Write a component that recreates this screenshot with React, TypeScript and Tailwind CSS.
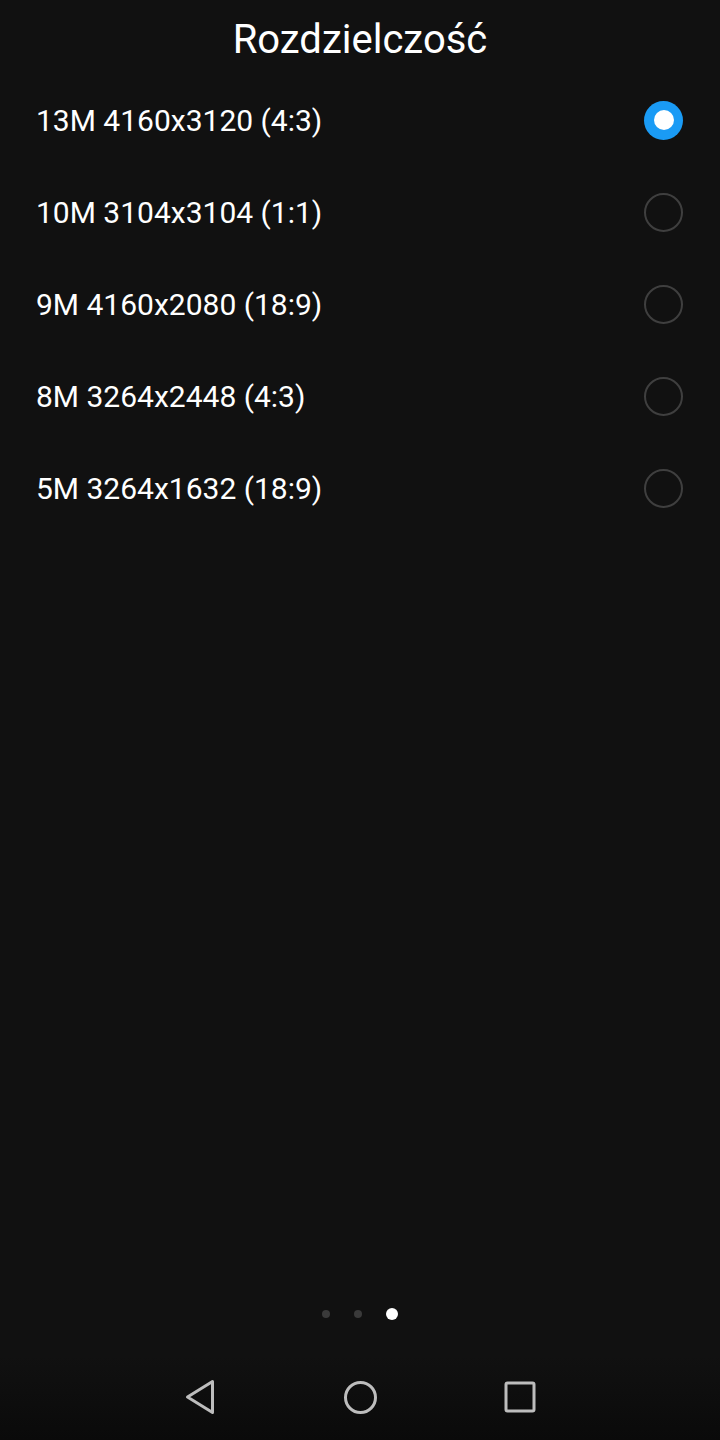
const options = [
  "13M 4160x3120 (4:3)",
  "10M 3104x3104 (1:1)",
  "9M 4160x2080 (18:9)",
  "8M 3264x2448 (4:3)",
  "5M 3264x1632 (18:9)",
];

const Radio = ({ checked }: { checked: boolean }) =>
  checked ? (
    <div className="w-[39px] h-[39px] rounded-full bg-[#1a9bf5] flex items-center justify-center">
      <div className="w-[20px] h-[20px] rounded-full bg-white" />
    </div>
  ) : (
    <div className="w-[39px] h-[39px] rounded-full border-[2px] border-[#3f3f3f]" />
  );

export default function App() {
  return (
    <div
      className="w-[720px] h-[1440px] bg-[#111111] text-white flex flex-col"
      style={{ fontFamily: "Roboto, 'Liberation Sans', sans-serif" }}
    >
      <div className="h-[74px] pt-[6px] flex items-center justify-center">
        <h1 className="text-[40px] leading-none font-normal">Rozdzielczość</h1>
      </div>

      <ul>
        {options.map((opt, i) => (
          <li key={opt} className="h-[92px] flex items-center justify-between pl-[36px] pr-[37px]">
            <span className="text-[30px] leading-none pt-[2px]">{opt}</span>
            <Radio checked={i === 0} />
          </li>
        ))}
      </ul>

      <div className="mt-auto flex items-center justify-center pb-[36px]">
        <div className="w-[8px] h-[8px] rounded-full bg-[#3a3a3a]" />
        <div className="w-[8px] h-[8px] rounded-full bg-[#3a3a3a] ml-[24px]" />
        <div className="w-[12px] h-[12px] rounded-full bg-white ml-[24px]" />
      </div>

      <div className="h-[84px] flex items-center justify-center gap-[126px] bg-gradient-to-b from-[#111111] to-[#0a0a0a] pb-[2px]">
        <svg width="32" height="36" viewBox="0 0 32 36">
          <path
            d="M27.5 2.5 L27.5 33.5 L2.5 18 Z"
            fill="none"
            stroke="#bdbdbd"
            strokeWidth="3"
            strokeLinejoin="round"
          />
        </svg>
        <svg width="35" height="35" viewBox="0 0 35 35">
          <circle cx="17.5" cy="17.5" r="15" fill="none" stroke="#bdbdbd" strokeWidth="3" />
        </svg>
        <svg width="32" height="32" viewBox="0 0 32 32">
          <rect x="2" y="2" width="28" height="28" rx="1.5" fill="none" stroke="#bdbdbd" strokeWidth="3" />
        </svg>
      </div>
    </div>
  );
}
